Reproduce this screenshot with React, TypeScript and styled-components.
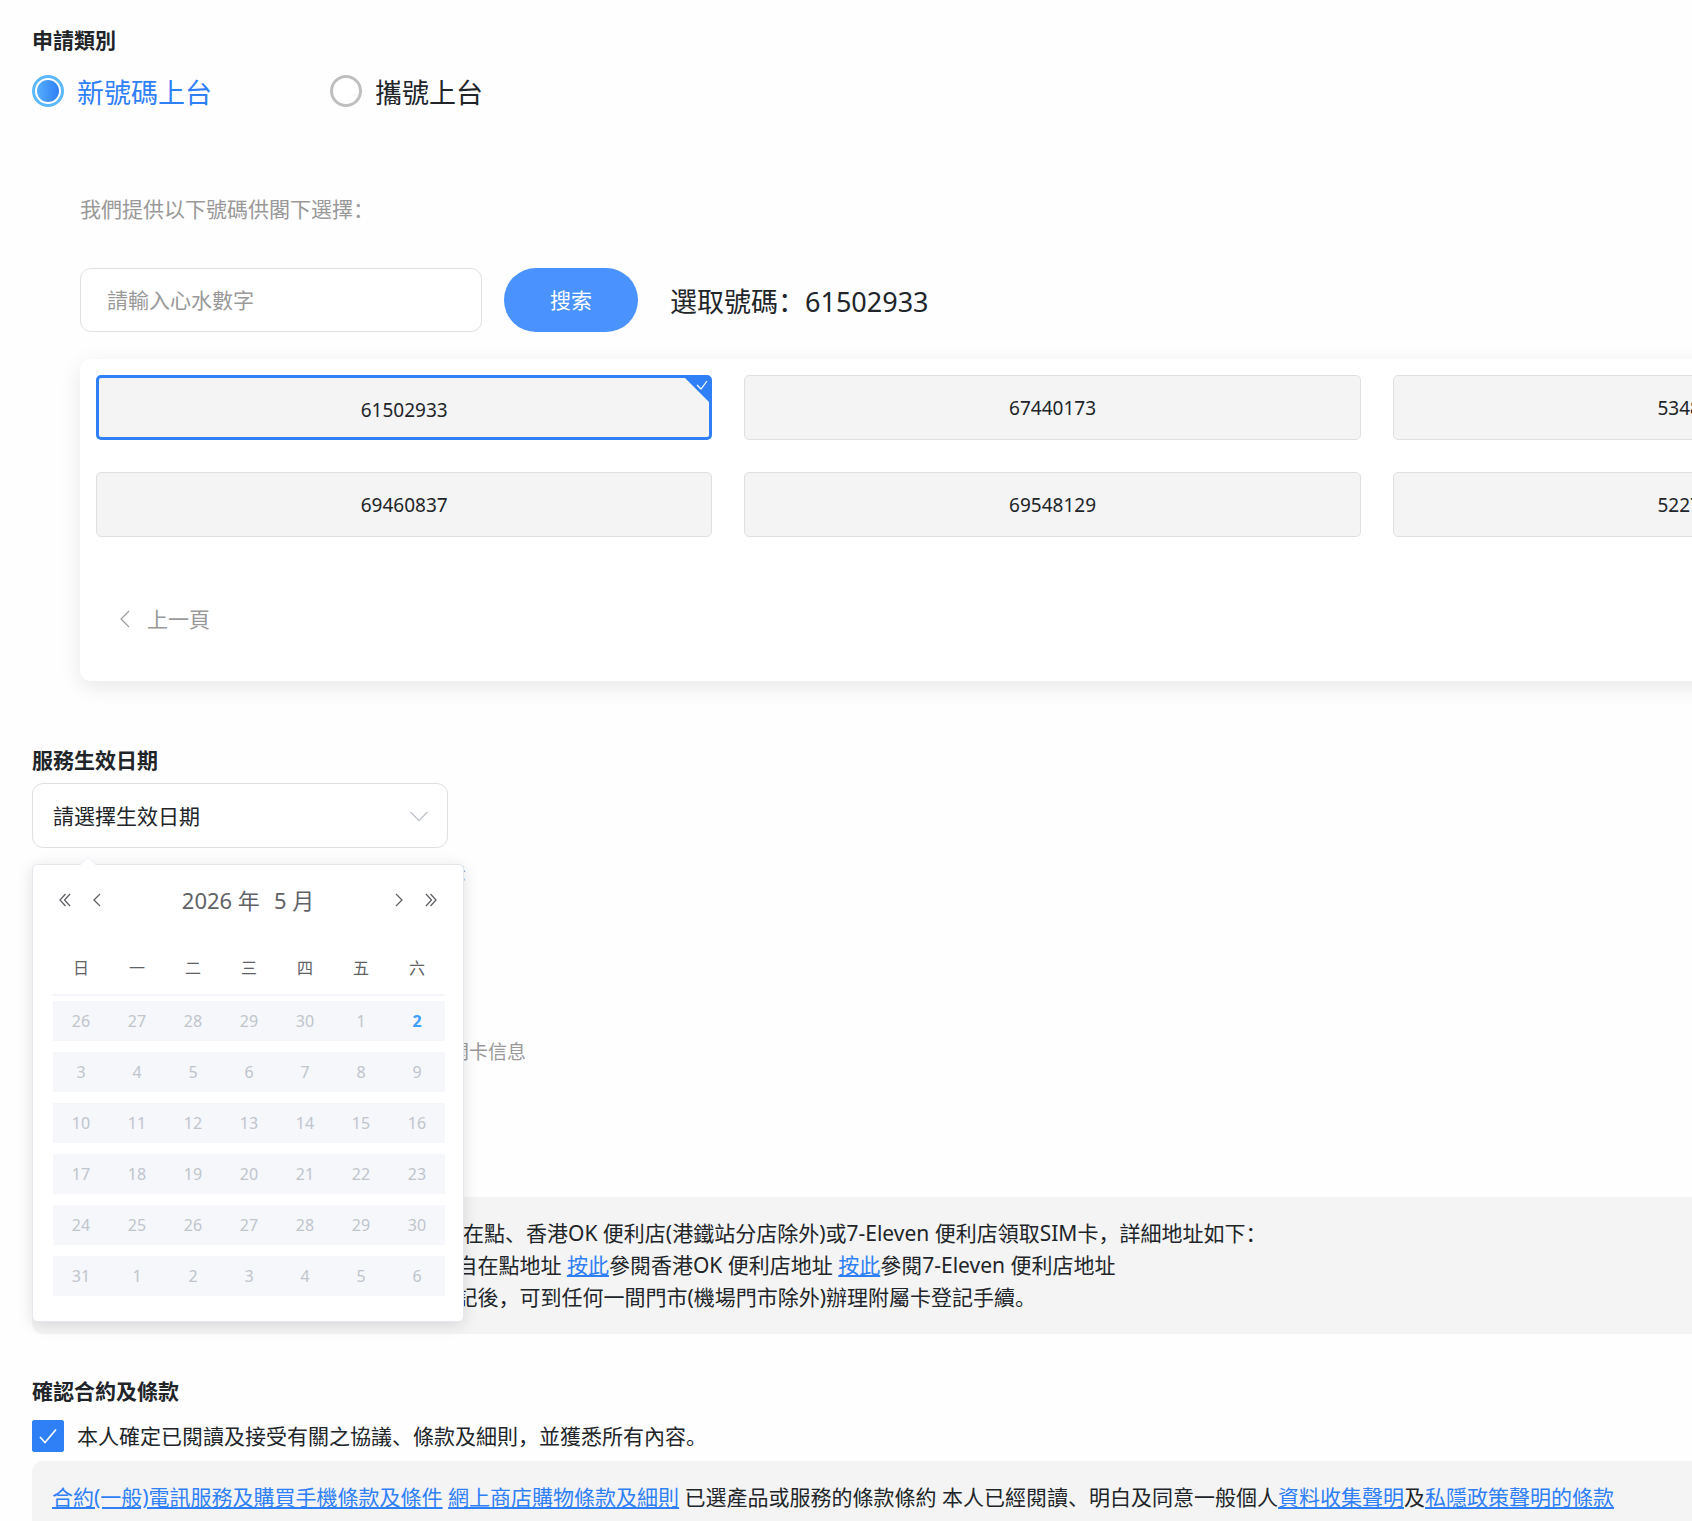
import React, { useState } from "react";
import styled, { createGlobalStyle, css } from "styled-components";

const color = {
  text: "#212529",
  muted: "#999999",
  primary: "#2f80f7",
  button: "#4a93ff",
  panel: "#f4f4f4",
  line: "#e0e0e0",
  calendarText: "#606266",
  calendarMuted: "#c0c4cc",
  calendarCell: "#f5f7fb",
};

const GlobalStyle = createGlobalStyle`
  *, *::before, *::after { box-sizing: border-box; }
  body {
    margin: 0;
    background: #fefefe;
    color: ${color.text};
    font-family: "Noto Sans", "Noto Sans CJK SC", sans-serif;
    font-size: 21px;
    line-height: 32px;
  }
  button, input, select { font: inherit; color: inherit; margin: 0; }
  button { border: 0; padding: 0; background: none; cursor: pointer; }
`;

const Viewport = styled.main`
  height: 100vh;
  overflow: hidden;
`;

const Sheet = styled.form`
  display: flex;
  flex-direction: column;
  width: 124vw;
  padding: 24px 32px 0;
`;

const Section = styled.section<{ $top?: number }>`
  display: flex;
  flex-direction: column;
  align-items: stretch;
  margin-top: ${(p) => p.$top ?? 0}px;
`;

const Title = styled.h2`
  margin: 0;
  font-size: 21px;
  line-height: 32px;
  font-weight: 700;
`;

const RadioRow = styled.div`
  display: flex;
  margin-top: 19px;
`;

const RadioLabel = styled.label<{ $on: boolean }>`
  display: flex;
  align-items: center;
  gap: 13px;
  width: 298px;
  height: 32px;
  color: ${(p) => (p.$on ? color.primary : color.text)};
`;

const Large = styled.span`
  padding-top: 3px;
  font-size: 27px;
  line-height: 32px;
`;

const Radio = styled.input`
  appearance: none;
  width: 32px;
  height: 32px;
  border: 3px solid #bfbfbf;
  border-radius: 50%;
  background: #fff;

  &:checked {
    border-color: #5cb8ff;
    padding: 2px;
    background: linear-gradient(90deg, #56adfb, #2f7ff6) content-box;
  }
`;

const Picker = styled.div`
  display: flex;
  flex-direction: column;
  margin: 86px 41px 0 48px;
`;

const PickerHint = styled.p`
  margin: 0;
  color: ${color.muted};
`;

const SearchRow = styled.div`
  display: flex;
  align-items: center;
  height: 64px;
  margin-top: 43px;
`;

const SearchInput = styled.input`
  width: 402px;
  height: 64px;
  padding: 0 26px;
  border: 1px solid ${color.line};
  border-radius: 11px;
  background: #fff;
  outline: none;
  &::placeholder { color: ${color.muted}; opacity: 1; }
`;

const SearchButton = styled.button`
  width: 134px;
  height: 64px;
  margin: 0 32px 0 22px;
  border-radius: 32px;
  background: ${color.button};
  color: #fff;
`;

const NumberCard = styled.div`
  margin-top: 27px;
  padding: 16px 16px 46px;
  border-radius: 11px;
  background: #fff;
  box-shadow: 0 6px 22px rgba(0, 0, 0, 0.09);
`;

const NumberGrid = styled.div`
  display: grid;
  grid-template-columns: repeat(3, 1fr);
  gap: 32px;
`;

const NumberButton = styled.button<{ $on: boolean }>`
  position: relative;
  height: 65px;
  border: 1px solid ${color.line};
  border-radius: 5px;
  background: ${color.panel};
  font-size: 19px;
  ${(p) => p.$on && css`
    border: 3px solid ${color.primary};
    padding-top: 4px;
  `}
`;

const Corner = styled.svg`
  position: absolute;
  top: 0;
  right: 0;
  width: 24px;
  height: 24px;
`;

const PrevButton = styled.button`
  display: flex;
  align-items: center;
  gap: 17px;
  margin: 66px 0 0 24px;
  color: ${color.muted};
`;

const SelectWrap = styled.div`
  position: relative;
  width: 416px;
  margin-top: 7px;
`;

const DateSelect = styled.select`
  display: block;
  appearance: none;
  width: 100%;
  height: 65px;
  padding: 0 20px;
  border: 1px solid ${color.line};
  border-radius: 11px;
  background: #fff;
  outline: none;
`;

const SelectArrow = styled.svg`
  position: absolute;
  top: 28px;
  right: 20px;
  pointer-events: none;
`;

const Popup = styled.div`
  position: absolute;
  z-index: 2;
  top: 81px;
  left: 0;
  width: 432px;
  padding: 15px 18px 19px 20px;
  border: 1px solid #e4e7ed;
  border-radius: 5px;
  background: #fff;
  box-shadow: 0 3px 16px rgba(0, 0, 0, 0.12);
  color: ${color.calendarText};
`;

const PopupTip = styled.svg`
  position: absolute;
  top: -8px;
  left: 47px;
`;

const CalendarHead = styled.div`
  display: flex;
  align-items: center;
  height: 40px;
  margin-bottom: 21px;
  padding: 0 8px 0 6px;
`;

const CalendarTitle = styled.div`
  flex: 1;
  display: flex;
  justify-content: center;
  gap: 14px;
  font-size: 22px;
`;

const Arrows = styled.div`
  display: flex;
  align-items: center;
  justify-content: space-between;
  width: 42px;
  svg { display: block; }
`;

const Days = styled.table`
  width: 100%;
  table-layout: fixed;
  border-collapse: collapse;
  font-size: 16px;
  line-height: 20px;
  th {
    height: 54px;
    padding: 0;
    border-bottom: 2px solid #f3f4f9;
    font-weight: 400;
  }
  td { padding: 5px 0 6px; }
`;

const Day = styled.button<{ $today: boolean }>`
  display: block;
  width: 100%;
  height: 40px;
  background: ${color.calendarCell};
  color: ${(p) => (p.$today ? "#409eff" : color.calendarMuted)};
  font-weight: ${(p) => (p.$today ? 700 : 400)};
`;

const Note = styled.p<{ $top: number }>`
  margin: ${(p) => p.$top}px 0 0;
  font-size: 19px;
  line-height: 24px;
  color: ${color.muted};
`;

const Panel = styled.div<{ $top: number }>`
  margin-top: ${(p) => p.$top}px;
  padding: 20px 20px 21px;
  border-radius: 11px;
  background: ${color.panel};
  p { margin: 0; }
`;

const Link = styled.a`
  color: ${color.primary};
  text-decoration: underline;
`;

const AgreeLabel = styled.label`
  display: flex;
  align-items: center;
  gap: 13px;
  margin-top: 13px;
`;

const BoxWrap = styled.span`
  display: grid;
  width: 32px;
  height: 32px;
  > * { grid-area: 1 / 1; }
`;

const CheckBox = styled.input`
  appearance: none;
  width: 32px;
  height: 32px;
  border: 1px solid ${color.muted};
  border-radius: 2px;
  &:checked {
    border-color: ${color.primary};
    background: ${color.primary};
  }
`;

const TickMark = styled.svg`
  place-self: center;
  pointer-events: none;
`;

type ArrowProps = { d: string; w: number; h: number; stroke?: number };

const Arrow = ({ d, w, h, stroke = 1.3 }: ArrowProps) => (
  <svg width={w} height={h} viewBox={`0 0 ${w} ${h}`} fill="none" stroke="currentColor" strokeWidth={stroke} aria-hidden="true">
    <path d={d} />
  </svg>
);

const numbers = ["61502933", "67440173", "53480162", "69460837", "69548129", "52271906"];
const weekdays = ["日", "一", "二", "三", "四", "五", "六"];
const weeks = [
  [26, 27, 28, 29, 30, 1, 2],
  [3, 4, 5, 6, 7, 8, 9],
  [10, 11, 12, 13, 14, 15, 16],
  [17, 18, 19, 20, 21, 22, 23],
  [24, 25, 26, 27, 28, 29, 30],
  [31, 1, 2, 3, 4, 5, 6],
];

function Calendar() {
  return (
    <Popup role="dialog" aria-label="選擇生效日期">
      <PopupTip width="16" height="9" viewBox="0 0 16 9" aria-hidden="true">
        <path d="M0 8 L8 0.5 L16 8 V9 H0Z" fill="#fff" />
        <path d="M0 7.6 L8 0.5 L16 7.6" fill="none" stroke="#ebeef5" />
      </PopupTip>
      <CalendarHead>
        <Arrows>
          <button type="button" aria-label="前一年"><Arrow w={12} h={14} d="M6.5 1 L1 7 L6.5 13 M11 1 L5.5 7 L11 13" /></button>
          <button type="button" aria-label="上個月"><Arrow w={8} h={14} d="M7 1 L1 7 L7 13" /></button>
        </Arrows>
        <CalendarTitle>
          <button type="button">2026 年</button>
          <button type="button">5 月</button>
        </CalendarTitle>
        <Arrows>
          <button type="button" aria-label="下個月"><Arrow w={8} h={14} d="M1 1 L7 7 L1 13" /></button>
          <button type="button" aria-label="後一年"><Arrow w={12} h={14} d="M1 1 L6.5 7 L1 13 M5.5 1 L11 7 L5.5 13" /></button>
        </Arrows>
      </CalendarHead>
      <Days>
        <thead>
          <tr>{weekdays.map((d) => <th key={d} scope="col">{d}</th>)}</tr>
        </thead>
        <tbody>
          {weeks.map((week, w) => (
            <tr key={w}>
              {week.map((day, d) => (
                <td key={d}>
                  <Day type="button" disabled $today={w === 0 && day === 2}>{day}</Day>
                </td>
              ))}
            </tr>
          ))}
        </tbody>
      </Days>
    </Popup>
  );
}

export default function App() {
  const [kind, setKind] = useState("new");
  const [picked, setPicked] = useState(numbers[0]);
  const [agreed, setAgreed] = useState(true);

  return (
    <Viewport lang="zh-CN">
      <GlobalStyle />
      <Sheet onSubmit={(e) => e.preventDefault()}>
        <Section>
          <Title>申請類別</Title>
          <RadioRow>
            <RadioLabel $on={kind === "new"}>
              <Radio type="radio" name="kind" checked={kind === "new"} onChange={() => setKind("new")} />
              <Large>新號碼上台</Large>
            </RadioLabel>
            <RadioLabel $on={kind === "port"}>
              <Radio type="radio" name="kind" checked={kind === "port"} onChange={() => setKind("port")} />
              <Large>攜號上台</Large>
            </RadioLabel>
          </RadioRow>
          <Picker>
            <PickerHint>我們提供以下號碼供閣下選擇：</PickerHint>
            <SearchRow>
              <SearchInput type="text" aria-label="請輸入心水數字" placeholder="請輸入心水數字" />
              <SearchButton type="submit">搜索</SearchButton>
              <Large as="output">選取號碼：{picked}</Large>
            </SearchRow>
            <NumberCard>
              <NumberGrid>
                {numbers.map((n) => (
                  <NumberButton key={n} type="button" $on={n === picked} onClick={() => setPicked(n)}>
                    {n}
                    {n === picked && (
                      <Corner viewBox="0 0 24 24" aria-hidden="true">
                        <path d="M0 0 H24 V24Z" fill={color.primary} />
                        <path d="M12 7 L16 11 L22 3" fill="none" stroke="#fff" strokeWidth="1.2" />
                      </Corner>
                    )}
                  </NumberButton>
                ))}
              </NumberGrid>
              <PrevButton type="button">
                <Arrow w={10} h={18} stroke={1.1} d="M9 1 L1 9 L9 17" />
                上一頁
              </PrevButton>
            </NumberCard>
          </Picker>
        </Section>

        <Section $top={63}>
          <Title as="label" htmlFor="effective-date">服務生效日期</Title>
          <SelectWrap>
            <DateSelect id="effective-date" defaultValue="">
              <option value="">請選擇生效日期</option>
            </DateSelect>
            <SelectArrow width="18" height="11" viewBox="0 0 18 11" fill="none" stroke="#c0c4cc" strokeWidth="1.4" aria-hidden="true">
              <path d="M0.5 1 L9 9.5 L17.5 1" />
            </SelectArrow>
            <Calendar />
          </SelectWrap>
          <Note $top={14}>※客戶可選的範圍為系統於日曆上以深黑色字體顯示</Note>
        </Section>

        <Section $top={61}>
          <Title>SIM卡領取方式</Title>
          <Note $top={61}>服務生效後客戶將收到電郵及短訊通知請小心核對開卡信息</Note>
          <Panel $top={133}>
            <p>成功登記後，客戶可於7日內到各中國移動自在點、香港OK 便利店(港鐵站分店除外)或7-Eleven 便利店領取SIM卡，詳細地址如下：</p>
            <p>客戶如需查詢各領取地點，請按此參閱所有 自在點地址 <Link href="#ok-stores">按此</Link>參閱香港OK 便利店地址 <Link href="#seven-stores">按此</Link>參閱7-Eleven 便利店地址</p>
            <p>如客戶需要申請附屬卡服務，請於主卡完成 記後，可到任何一間門市(機場門市除外)辦理附屬卡登記手續。</p>
          </Panel>
        </Section>

        <Section $top={41}>
          <Title>確認合約及條款</Title>
          <AgreeLabel>
            <BoxWrap>
              <CheckBox type="checkbox" checked={agreed} onChange={(e) => setAgreed(e.target.checked)} />
              {agreed && (
                <TickMark width="18" height="16" viewBox="0 0 18 16" fill="none" stroke="#fff" strokeWidth="1.6" aria-hidden="true">
                  <path d="M1 9 L6 14.5 L17 1.5" />
                </TickMark>
              )}
            </BoxWrap>
            本人確定已閱讀及接受有關之協議、條款及細則，並獲悉所有內容。
          </AgreeLabel>
          <Panel $top={9}>
            <p>
              <Link href="#contract">合約(一般)電訊服務及購買手機條款及條件</Link>{" "}
              <Link href="#shop-terms">網上商店購物條款及細則</Link>{" "}
              已選產品或服務的條款條約 本人已經閱讀、明白及同意一般個人<Link href="#data">資料收集聲明</Link>及<Link href="#privacy">私隱政策聲明的條款</Link>
            </p>
          </Panel>
        </Section>
      </Sheet>
    </Viewport>
  );
}
